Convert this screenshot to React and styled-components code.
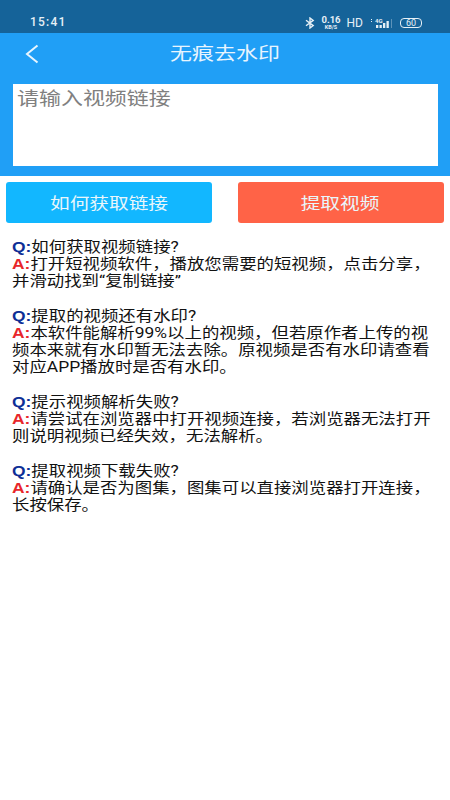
import React from "react";
import styled, { createGlobalStyle } from "styled-components";

const Global = createGlobalStyle`
  html, body { margin: 0; padding: 0; background: #fff; }
  * { box-sizing: border-box; }
  body { font-family: Roboto, "Noto Sans CJK SC", sans-serif; }
`;

const Page = styled.div`
  width: 450px;
  height: 800px;
  background: #fff;
  overflow: hidden;
`;

const StatusBar = styled.div`
  height: 33px;
  background: #156399;
  color: #e6f0f6;
  display: flex;
  align-items: flex-end;
  justify-content: space-between;
  padding: 0 28px 2px 30px;
`;

const Time = styled.span`
  font: 500 12px/17px Roboto, sans-serif;
  letter-spacing: 1.2px;
`;

const StatusIcons = styled.div`
  display: flex;
  align-items: center;
  height: 17px;
`;

const Speed = styled.div`
  display: flex;
  flex-direction: column;
  align-items: center;
  font: 700 9.5px/8px Roboto, sans-serif;
  margin-left: 6px;
  & > small { font-size: 5.5px; line-height: 6px; }
`;

const Hd = styled.span`
  font: 400 12px/14px Roboto, sans-serif;
  margin-left: 6px;
`;

const Signal = styled.svg`
  margin-left: 7px;
`;

const Battery = styled.span`
  width: 22px;
  height: 10px;
  border: 1px solid #e6f0f6;
  border-radius: 4px;
  margin-left: 8px;
  font: 400 9px/8px Roboto, sans-serif;
  text-align: center;
`;

const Header = styled.div`
  background: #209ff6;
  height: 143px;
  padding: 0 12.5px 10px;
  display: flex;
  flex-direction: column;
`;

const TitleRow = styled.div`
  position: relative;
  height: 51px;
  padding-bottom: 10px;
  display: flex;
  align-items: center;
  justify-content: center;
`;

const Back = styled.svg`
  position: absolute;
  left: 12px;
  top: 11px;
`;

const Title = styled.h1`
  margin: 0;
  font-size: 18px;
  font-weight: 400;
  line-height: 30px;
  color: #e8f5fe;
  transform: scaleX(1.22);
`;

const LinkBox = styled.div`
  flex: 1;
  background: #fff;
  padding: 0 4.5px;
`;

const Placeholder = styled.span`
  display: inline-block;
  color: #808080;
  font-size: 18px;
  line-height: 30px;
  transform: scaleX(1.22);
  transform-origin: left center;
`;

const Actions = styled.div`
  display: flex;
  justify-content: space-between;
  padding: 6px 6.5px 0 6px;
`;

const Action = styled.button`
  width: 206px;
  height: 41px;
  border: 0;
  border-radius: 3px;
  background: ${(p) => p.$bg};
  color: #e9f6fb;
  font-family: inherit;
  font-size: 16px;
  padding: 0 0 2px;
`;

const ActionLabel = styled.span`
  display: inline-block;
  transform: scaleX(1.23);
`;

const Faq = styled.div`
  padding: 16px 0 0 12px;
  display: flex;
  flex-direction: column;
  gap: 17.2px;
`;

const Item = styled.div`
  font-size: 14.5px;
  line-height: 17.2px;
  font-weight: 400;
  color: #111;
  white-space: pre-line;
  transform: scaleX(1.2);
  transform-origin: left top;
`;

const Mark = styled.b`
  color: ${(p) => p.$c};
  font-family: "Liberation Sans", sans-serif;
  font-weight: 700;
`;

const faqs = [
  ["如何获取视频链接?", "打开短视频软件，播放您需要的短视频，点击分享，\n并滑动找到“复制链接”"],
  ["提取的视频还有水印?", "本软件能解析99%以上的视频，但若原作者上传的视\n频本来就有水印暂无法去除。原视频是否有水印请查看\n对应APP播放时是否有水印。"],
  ["提示视频解析失败?", "请尝试在浏览器中打开视频连接，若浏览器无法打开\n则说明视频已经失效，无法解析。"],
  ["提取视频下载失败?", "请确认是否为图集，图集可以直接浏览器打开连接，\n长按保存。"],
];

export default function App() {
  return (
    <Page>
      <Global />
      <StatusBar>
        <Time>15:41</Time>
        <StatusIcons>
          <svg width="10" height="12" viewBox="0 0 10 12" fill="none" stroke="#e6f0f6" strokeWidth="1.4">
            <path d="M1 3.2 8.2 8.6 5 11V1L8.2 3.4 1 8.8" />
          </svg>
          <Speed>
            0.16
            <small>KB/S</small>
          </Speed>
          <Hd>HD</Hd>
          <Signal width="22" height="12" viewBox="0 0 22 12" fill="#e6f0f6">
            <rect x="1" y="2" width="1" height="1" />
            <rect x="1" y="4" width="1" height="1" />
            <text x="5" y="5.5" fontSize="6" fontFamily="Roboto" fontWeight="700">4G</text>
            <rect x="6" y="8" width="2.3" height="3" />
            <rect x="9.5" y="8" width="2.3" height="3" />
            <rect x="13" y="6" width="2.3" height="5" />
            <rect x="16.5" y="4" width="2.3" height="7" />
            <rect x="21" y="2" width="0.7" height="9" opacity="0.5" />
          </Signal>
          <Battery>60</Battery>
        </StatusIcons>
      </StatusBar>
      <Header>
        <TitleRow>
          <Back width="15" height="20" viewBox="0 0 15 20" fill="none" stroke="#e8f5fe" strokeWidth="2">
            <path d="M12.5 1.5 2 10 12.5 18.5" />
          </Back>
          <Title>无痕去水印</Title>
        </TitleRow>
        <LinkBox>
          <Placeholder>请输入视频链接</Placeholder>
        </LinkBox>
      </Header>
      <Actions>
        <Action $bg="#12b7ff"><ActionLabel>如何获取链接</ActionLabel></Action>
        <Action $bg="#ff6347"><ActionLabel>提取视频</ActionLabel></Action>
      </Actions>
      <Faq>
        {faqs.map(([q, a]) => (
          <Item key={q}>
            <div>
              <Mark $c="#0e2f96">Q:</Mark>
              {q}
            </div>
            <div>
              <Mark $c="#e8262a">A:</Mark>
              {a}
            </div>
          </Item>
        ))}
      </Faq>
    </Page>
  );
}
